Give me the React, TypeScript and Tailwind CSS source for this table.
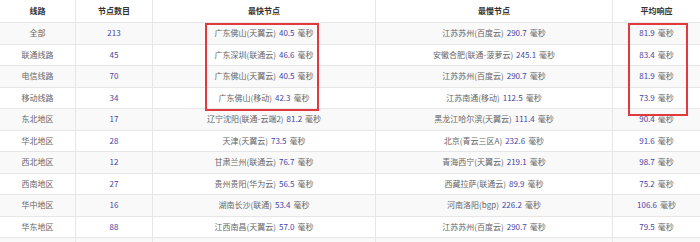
import React from "react";

type Row = {
  line: string;
  count: string;
  fast: string;
  fastMs: string;
  slow: string;
  slowMs: string;
  avg: string;
};

const rows: Row[] = [
  { line: "全部", count: "213", fast: "广东佛山(天翼云)", fastMs: "40.5", slow: "江苏苏州(百度云)", slowMs: "290.7", avg: "81.9" },
  { line: "联通线路", count: "45", fast: "广东深圳(联通云)", fastMs: "46.6", slow: "安徽合肥(联通-菠萝云)", slowMs: "245.1", avg: "83.4" },
  { line: "电信线路", count: "70", fast: "广东佛山(天翼云)", fastMs: "40.5", slow: "江苏苏州(百度云)", slowMs: "290.7", avg: "81.9" },
  { line: "移动线路", count: "34", fast: "广东佛山(移动)", fastMs: "42.3", slow: "江苏南通(移动)", slowMs: "112.5", avg: "73.9" },
  { line: "东北地区", count: "17", fast: "辽宁沈阳(联通-云端2)", fastMs: "81.2", slow: "黑龙江哈尔滨(天翼云)", slowMs: "111.4", avg: "90.4" },
  { line: "华北地区", count: "28", fast: "天津(天翼云)", fastMs: "73.5", slow: "北京(青云三区A)", slowMs: "232.6", avg: "91.6" },
  { line: "西北地区", count: "12", fast: "甘肃兰州(联通云)", fastMs: "76.7", slow: "青海西宁(天翼云)", slowMs: "219.1", avg: "98.7" },
  { line: "西南地区", count: "27", fast: "贵州贵阳(华为云)", fastMs: "56.5", slow: "西藏拉萨(联通云)", slowMs: "89.9", avg: "75.2" },
  { line: "华中地区", count: "16", fast: "湖南长沙(联通)", fastMs: "53.4", slow: "河南洛阳(bgp)", slowMs: "226.2", avg: "106.6" },
  { line: "华东地区", count: "88", fast: "江西南昌(天翼云)", fastMs: "57.0", slow: "江苏苏州(百度云)", slowMs: "290.7", avg: "79.5" },
];

const cols = "grid grid-cols-[76px_77px_223px_237px_87px]";
const cell = "flex items-center justify-center border-r border-[#e6e6e6] last:border-r-0 whitespace-nowrap";

function Ms({ v }: { v: string }) {
  return (
    <>
      <span className="text-[#4545a5]">{v}</span>
      <span className="ml-[3px] text-[#666]">毫秒</span>
    </>
  );
}

export default function App() {
  return (
    <div
      className="relative w-[700px] h-[242px] overflow-hidden bg-white text-[8px] text-[#666]"
      style={{ fontFamily: '"Noto Sans CJK SC", "Microsoft YaHei", sans-serif' }}
    >
      <div className={`${cols} h-[23px] border-b border-[#e6e6e6] bg-white text-[#333] font-semibold`}>
        <div className={cell}>线路</div>
        <div className={cell}>节点数目</div>
        <div className={cell}>最快节点</div>
        <div className={cell}>最慢节点</div>
        <div className={cell}>平均响应</div>
      </div>
      {rows.map((r, i) => (
        <div
          key={i}
          className={`${cols} h-[21.5px] border-b border-[#e6e6e6] ${i % 2 === 0 ? "bg-[#f9f9f9]" : "bg-white"}`}
        >
          <div className={cell}>{r.line}</div>
          <div className={`${cell} text-[#4545a5]`}>{r.count}</div>
          <div className={cell}>
            <span>{r.fast}</span>
            <span className="ml-[3px]" />
            <Ms v={r.fastMs} />
          </div>
          <div className={cell}>
            <span>{r.slow}</span>
            <span className="ml-[3px]" />
            <Ms v={r.slowMs} />
          </div>
          <div className={cell}>
            <Ms v={r.avg} />
          </div>
        </div>
      ))}
      <div className={`${cols} h-[21.5px] bg-[#f9f9f9]`}>
        <div className={cell} />
        <div className={cell} />
        <div className={cell} />
        <div className={cell} />
        <div className={cell} />
      </div>
      <div className="absolute left-[205px] top-[23px] w-[114px] h-[88px] border-2 border-[#e0393e]" />
      <div className="absolute left-[628px] top-[23px] w-[60px] h-[93px] border-2 border-[#e0393e]" />
    </div>
  );
}
